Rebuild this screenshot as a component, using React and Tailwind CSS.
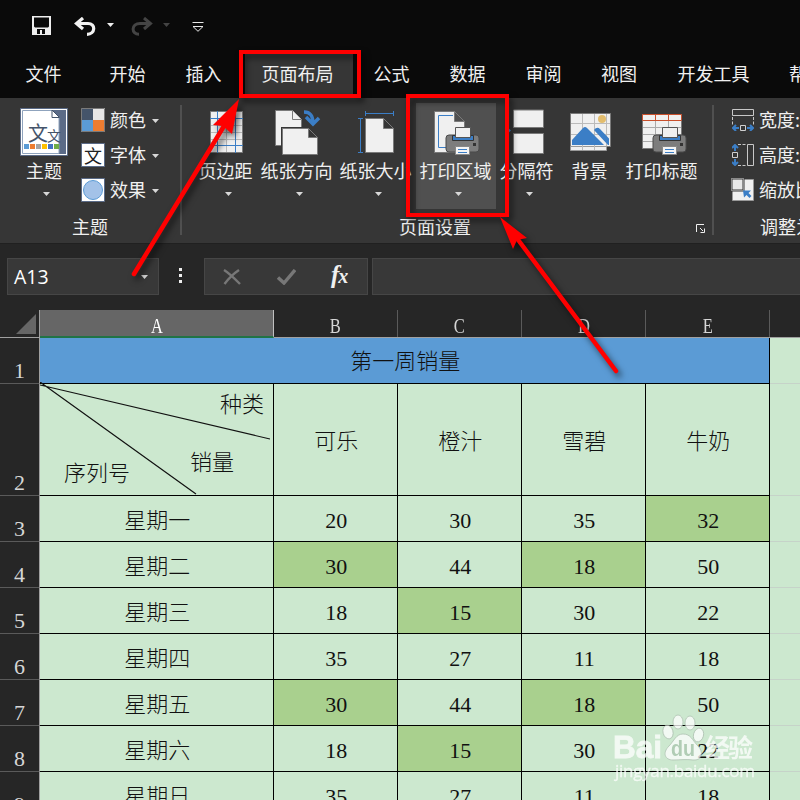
import clsx from "clsx";

const TABS = [
  { label: "文件", className: "w-[87px]" },
  { label: "开始", className: "w-[81px]" },
  { label: "插入", className: "w-[71px]" },
  { label: "页面布局", className: "w-[118px]", active: true },
  { label: "公式", className: "w-[69px]" },
  { label: "数据", className: "w-[83px]" },
  { label: "审阅", className: "w-[69px]" },
  { label: "视图", className: "w-[82px]" },
  { label: "开发工具", className: "w-[107px]" },
  { label: "帮助", className: "w-[80px]" },
];

const COLUMNS = [
  { label: "A", className: "w-[234px]", selected: true },
  { label: "B", className: "w-[124px]" },
  { label: "C", className: "w-[124px]" },
  { label: "D", className: "w-[124px]" },
  { label: "E", className: "w-[124px]" },
];

const ROWS = [
  { id: 3, day: "星期一", values: [20, 30, 35, 32], marked: [3] },
  { id: 4, day: "星期二", values: [30, 44, 18, 50], marked: [0, 2] },
  { id: 5, day: "星期三", values: [18, 15, 30, 22], marked: [1] },
  { id: 6, day: "星期四", values: [35, 27, 11, 18], marked: [] },
  { id: 7, day: "星期五", values: [30, 44, 18, 50], marked: [0, 2] },
  { id: 8, day: "星期六", values: [18, 15, 30, 22], marked: [1] },
  { id: 9, day: "星期日", values: [35, 27, 11, 18], marked: [] },
];

const Caret = ({ className }) => (
  <svg className={clsx("h-1 w-[7px] shrink-0", className || "text-[#d8d8d8]")} viewBox="0 0 7 4" fill="currentColor">
    <path d="M0 0h7L3.5 4z" />
  </svg>
);

const QuickAccessBar = () => (
  <div className="flex h-[52px] items-center pl-8">
    <svg className="mb-0.5 h-[19px] w-[19px]" viewBox="0 0 19 19">
      <path fill="#eee" fillRule="evenodd" d="M0 0h19v19H0zM2 1.5V10.500l1 1h13l1-1V1.500zM5 13v5h3v-4h2v4h3v-5z" />
    </svg>
    <svg className="ml-[23px] h-[19px] w-[22px]" viewBox="0 0 22 19" fill="none" stroke="#f2f2f2">
      <path strokeWidth="3.200" d="M9 1L2.500 6.500L9 12M3 6.500H14C22 6.500 21.500 17.300 13 17.300" />
    </svg>
    <Caret className="mb-0.5 ml-[11px] text-[#eee]" />
    <svg className="ml-[17px] h-[19px] w-[22px]" viewBox="0 0 22 19" fill="none" stroke="#444">
      <path strokeWidth="3" d="M13 1l6.500 5.500L13 12M19 6.500H9C0 6.500 0 17.300 8 17.300" />
    </svg>
    <Caret className="mb-0.5 ml-2.5 text-[#444]" />
    <svg className="mt-px ml-[22px] h-[10px] w-[12px]" viewBox="0 0 12 10" fill="none" stroke="#e8e8e8">
      <path d="M.5.5h11M1 4.500h10L6 9.300z" />
    </svg>
  </div>
);

const TabStrip = () => (
  <div className="flex h-[46px] w-[900px] items-stretch">
    {TABS.map((tab) => (
      <div key={tab.label} className={clsx("flex shrink-0 justify-center", tab.className)}>
        <span
          className={clsx(
            "flex items-center justify-center pb-1 text-[18px]",
            tab.active && "ml-px w-[108px] bg-[#363636] pr-0.5"
          )}
        >
          {tab.label}
        </span>
      </div>
    ))}
  </div>
);

const ThemeIcon = () => (
  <svg className="h-12 w-12" viewBox="0 0 48 48">
    <path fill="#fff" stroke="#5b6b87" d="M.5.5h47v47H.5z" />
    <path fill="#5b6b87" d="M32 2h14v44H39z" />
    <path fill="#fff" stroke="#8fa3bd" d="M2.500 2.500H32l7 7V45.500H2.500z" />
    <path fill="#fff" stroke="#44546a" d="M32 2v7.500h7.500z" />
    <text x="8" y="33" fontSize="20" fill="#44546a">文</text>
    <text x="27" y="33" fontSize="14" fill="#44546a">文</text>
    {["#5b9bd5", "#ed7d31", "#a5a5a5", "#ffc000", "#4472c4", "#70ad47"].map((color, index) => (
      <rect key={color} x={4 + index * 6} y="36" width="5" height="5" fill={color} />
    ))}
  </svg>
);

const ColorsIcon = () => (
  <svg className="h-6 w-6" viewBox="0 0 24 24">
    <path fill="#44546a" d="M0 0h12v12H0z" />
    <path fill="#e7e6e6" d="M12 0h12v12H12z" />
    <path fill="#5b9bd5" d="M0 12h12v12H0z" />
    <path fill="#ed7d31" d="M12 12h12v12H12z" />
    <path fill="none" stroke="#7b7b7b" d="M.5.5h23v23H.5z" />
  </svg>
);

const FontsIcon = () => (
  <svg className="h-6 w-6" viewBox="0 0 24 24">
    <path fill="#fff" stroke="#5b6b87" d="M.5.5h23v23H.5z" />
    <text x="3" y="20" fontSize="18" fill="#222">文</text>
  </svg>
);

const EffectsIcon = () => (
  <svg className="h-6 w-6" viewBox="0 0 24 24">
    <path fill="#fff" stroke="#5b6b87" d="M.5.5h23v23H.5z" />
    <circle cx="12" cy="12" r="9.500" fill="#a3c2e8" stroke="#5b9bd5" />
  </svg>
);

const MarginsIcon = () => (
  <svg className="h-[50px] w-16" viewBox="194 107 64 50">
    <path fill="#f0f0f0" stroke="#7a7a7a" d="M210.500 111.500h32v41h-32z" />
    <path fill="none" stroke="#bbb" d="M211 125.500h31M211 132.500h31M211 139.500h31M226.500 112v40" />
    <path fill="none" stroke="#3b7ec6" d="M217.500 111v42M235.500 111v42M210 118.500h33M210 145.500h33" />
  </svg>
);

const OrientationIcon = () => (
  <svg className="h-[50px] w-[78px]" viewBox="258 107 78 50">
    <path fill="#f0f0f0" stroke="#7a7a7a" d="M275.500 110.500h17l9 9v26h-26z" />
    <path fill="#f0f0f0" stroke="#7a7a7a" d="M292.500 110.500v9h9" />
    <path fill="#363636" d="M281 127h29l9 9v20h-38z" />
    <path fill="#f0f0f0" stroke="#7a7a7a" d="M282.500 128.500h26l9 9v17h-35zM308.500 128.500v9h9" />
    <path fill="none" stroke="#3b7ec6" strokeWidth="3.500" d="M304 112c6 0 9 3 9 12M306 117l7 7l6-6" />
  </svg>
);

const SizeIcon = () => (
  <svg className="h-[50px] w-20" viewBox="336 107 80 50">
    <path fill="#f0f0f0" stroke="#7a7a7a" d="M365.500 118.500h18l10 10v24h-28zM383.500 118.500v10h10" />
    <path fill="none" stroke="#3b7ec6" d="M365.500 111v5M393.500 111v5M365 113.500h29M358 118.500h5M358 152.500h5M360.500 118v35" />
  </svg>
);

const Printer = () => (
  <g>
    <rect x="0" y="8" width="33" height="17" rx="3" fill="#7d7d7d" stroke="#4a4a4a" />
    <path fill="#3b7ec6" stroke="#333" d="M6.500 8.500h21v5h-21z" />
    <path fill="#f0f0f0" stroke="#555" d="M9.500.5h15v10h-15z" />
    <path fill="#333" d="M27 16h3v3h-3z" />
    <path fill="#f5f5f5" stroke="#888" d="M9.500 19.500h14v8h-14z" />
    <path stroke="#3b7ec6" d="M12 22.500h9M12 25.500h9" />
  </g>
);

const PrintAreaIcon = () => (
  <svg className="h-[50px] w-20" viewBox="416 107 80 50">
    <path fill="#f0f0f0" stroke="#7a7a7a" d="M434.500 111.500h20l10 10v31h-30zM454.500 111.500v10h10" />
    <path fill="none" stroke="#3b7ec6" d="M453 115.500h-14.500v32h12" />
    <g transform="translate(446 127)">
      <Printer />
    </g>
  </svg>
);

const BreaksIcon = () => (
  <svg className="h-[50px] w-[62px]" viewBox="496 107 62 50">
    <path fill="#f0f0f0" stroke="#7a7a7a" d="M513.500 110h30v17.500h-30zM513.500 133.500h30v20h-30z" />
    <path fill="#3b7ec6" d="M505 125l6 5.500l-6 5.500z" />
  </svg>
);

const BackgroundIcon = () => (
  <svg className="h-[50px] w-16" viewBox="558 107 64 50">
    <path fill="#f0f0f0" stroke="#7a7a7a" d="M570.500 113.500h40v33h-40z" />
    <path fill="#f0f0f0" stroke="#999" d="M570.500 146.500h36v4h-36z" />
    <path fill="none" stroke="#bbb" d="M582.500 114v36M594.500 114v36M606.500 114v32M571 123.500h39M571 134.500h39" />
    <circle cx="602" cy="119" r="4" fill="#e3bd6d" />
    <path fill="#3b7ec6" d="M572 145v-5l11-12q2-2 4 0l17 17zM594 130q3-4 6-1l9 9.500v6.500h-1z" />
  </svg>
);

const PrintTitlesIcon = () => (
  <svg className="h-[50px] w-20" viewBox="622 107 80 50">
    <path fill="#f0f0f0" stroke="#7a7a7a" d="M642.500 114.500h39v34h-39z" />
    <path fill="none" stroke="#aaa" d="M643 127.500h38M643 134.500h38M643 141.500h38M655.500 121v27M668.500 121v27" />
    <path fill="none" stroke="#c9502c" d="M642.500 114.500h39v6h-39zM655.500 114v6M668.500 114v6" />
    <g transform="translate(653 127)">
      <Printer />
    </g>
  </svg>
);

const PAGE_SETUP = [
  { label: "页边距", icon: MarginsIcon, className: "w-16", menu: true },
  { label: "纸张方向", icon: OrientationIcon, className: "w-[78px]", menu: true },
  { label: "纸张大小", icon: SizeIcon, className: "w-20", menu: true },
  { label: "打印区域", icon: PrintAreaIcon, className: "w-20 bg-[#505050]", menu: true },
  { label: "分隔符", icon: BreaksIcon, className: "w-[62px]", menu: true },
  { label: "背景", icon: BackgroundIcon, className: "w-16" },
  { label: "打印标题", icon: PrintTitlesIcon, className: "w-20" },
];

const THEME_TOOLS = [
  { label: "颜色", icon: ColorsIcon },
  { label: "字体", icon: FontsIcon },
  { label: "效果", icon: EffectsIcon },
];

const WidthIcon = () => (
  <svg className="h-[22px] w-[22px]" viewBox="0 0 22 22" fill="none">
    <path stroke="#c8c8c8" d="M.5.5h21v6H.5z" />
    <path stroke="#c8c8c8" strokeDasharray="3 1.500" d="M.5 8v8M21.500 8v8" />
    <path stroke="#d0d0d0" d="M8.500 16.500h5v5h-5z" />
    <path stroke="#3b7ec6" strokeWidth="2" d="M7 19H1M4 16l-3 3l3 3M15 19h6M18 16l3 3l-3 3" />
  </svg>
);

const HeightIcon = () => (
  <svg className="h-[22px] w-[22px]" viewBox="0 0 22 22" fill="none">
    <path stroke="#c8c8c8" d="M15.500.5h6v21h-6z" />
    <path stroke="#c8c8c8" strokeDasharray="3 1.500" d="M6 .5h8M6 21.500h8" />
    <path stroke="#d0d0d0" d="M.5 8.500h5v5h-5z" />
    <path stroke="#3b7ec6" strokeWidth="2" d="M3 7V1M0 4l3-3l3 3M3 15v6M0 18l3 3l3-3" />
  </svg>
);

const ScaleIcon = () => (
  <svg className="h-[22px] w-[22px] overflow-visible" viewBox="0 0 22 22" fill="none">
    <path fill="#f0f0f0" stroke="#999" d="M.5.5h21v21H.5z" />
    <path fill="#e8e8e8" stroke="#363636" strokeWidth="2" d="M-.5-.5h12v12h-12z" />
    <path stroke="#ddd" strokeDasharray="1 1" d="M-.5-.5h12v12h-12z" />
    <path fill="#3b7ec6" d="M11 11.500h8l-2.500 2.500l3 3l-2 2l-3-3l-2.500 2.500z" />
  </svg>
);

const SCALE_TOOLS = [
  { label: "宽度:", icon: WidthIcon },
  { label: "高度:", icon: HeightIcon },
  { label: "缩放比例:", icon: ScaleIcon },
];

const Ribbon = () => (
  <div className="flex h-[145px] w-[900px] bg-[#363636] text-[18px] leading-6">
    <div className="flex w-[180px] flex-col pt-2.5">
      <div className="flex h-[106px]">
        <div className="flex w-[61px] shrink-0 flex-col items-center pl-[27px]">
          <div className="flex w-12 flex-col items-center">
            <ThemeIcon />
            <span className="mt-0.5 whitespace-nowrap">主题</span>
            <Caret className="mt-2.5 ml-[5px] text-[#d8d8d8]" />
          </div>
        </div>
        <div className="ml-5 flex flex-col gap-[11px]">
          {THEME_TOOLS.map(({ label, icon: Icon }) => (
            <div key={label} className="flex h-6 items-center">
              <Icon />
              <span className="mb-0.5 ml-[5px] h-6">{label}</span>
              <Caret className="mt-0.5 ml-1.5 text-[#d8d8d8]" />
            </div>
          ))}
        </div>
      </div>
      <div className="text-center">主题</div>
    </div>
    <div className="mt-[7px] h-[130px] w-0.5 bg-[#505050]" />
    <div className="flex w-[530px] flex-col pt-[5px]">
      <div className="flex h-[106px] pl-3">
        {PAGE_SETUP.map(({ label, icon: Icon, className, menu }) => (
          <div key={label} className={clsx("flex shrink-0 flex-col items-center pt-1", className)}>
            <Icon />
            <span className="mt-px mr-px whitespace-nowrap">{label}</span>
            {menu && <Caret className="mt-2.5 ml-[5px] text-[#d8d8d8]" />}
          </div>
        ))}
      </div>
      <div className="flex items-center justify-between pt-[5px] pr-[7px]">
        <span className="ml-[217px]">页面设置</span>
        <svg className="mt-1 h-[9px] w-[9px]" viewBox="0 0 9 9" fill="none" stroke="#f0f0f0">
          <path d="M.5 8V.5H8M4 4l3 3M8.500 4.500v4h-4" />
        </svg>
      </div>
    </div>
    <div className="mt-[7px] h-[130px] w-0.5 bg-[#505050]" />
    <div className="flex flex-col pt-2.5 pl-[18px]">
      <div className="flex h-[106px] flex-col gap-[11px]">
        {SCALE_TOOLS.map(({ label, icon: Icon }) => (
          <div key={label} className="flex h-6 items-center whitespace-nowrap">
            <Icon />
            <span className="mb-0.5 ml-[5px] h-6">{label}</span>
          </div>
        ))}
      </div>
      <span className="ml-7">调整为合适大小</span>
    </div>
  </div>
);

const FormulaBar = () => (
  <div className="flex h-[67px] items-start border-t border-[#202020] bg-[#262626] pt-3.5 pl-[7px]">
    <div className="flex h-[37px] w-[152px] items-center justify-between border border-[#464646] bg-[#383838] pr-2.5 pl-1.5 font-['Open_Sans',sans-serif] text-[19.500px] text-white">
      A13
      <Caret />
    </div>
    <div className="mt-2.5 ml-5 flex w-[3px] flex-col gap-[3px]">
      <span className="h-[3px] bg-[#eee]" />
      <span className="h-[3px] bg-[#eee]" />
      <span className="h-[3px] bg-[#eee]" />
    </div>
    <div className="ml-[22px] flex h-[37px] w-[164px] items-center border border-[#464646] bg-[#383838] pl-[18px]">
      <svg className="h-4 w-[18px]" viewBox="0 0 18 16" fill="none" stroke="#777" strokeWidth="2.400">
        <path d="M1 1c5 3 10 8 16 14M16 1C10 5 6 9 1.500 15" />
      </svg>
      <svg className="ml-9 h-4 w-[19px]" viewBox="0 0 19 16" fill="none" stroke="#777" strokeWidth="3.400">
        <path d="M1 8.500l6 5.500L18 1" />
      </svg>
      <span className="ml-[35px] pb-1 font-['Liberation_Serif',serif] text-[25px] font-bold italic tracking-[-1px]">
        f<span className="text-[20px]">x</span>
      </span>
    </div>
    <div className="ml-1 h-[37px] flex-1 border border-r-0 border-[#464646] bg-[#383838]" />
  </div>
);

const ColumnHeaders = () => (
  <div className="flex h-7 border-b border-[#a0a0a0] bg-[#262626] text-[22px] text-[#d6d6d6]">
    <div className="flex w-10 shrink-0 items-end justify-end border-r border-[#a0a0a0] pr-[3px] pb-[3px]">
      <svg className="h-5 w-5" viewBox="0 0 20 20">
        <path fill="#666" d="M20 0v20H0z" />
      </svg>
    </div>
    {COLUMNS.map((column) => (
      <div
        key={column.label}
        className={clsx(
          "flex shrink-0 items-center justify-center border-r pt-1",
          column.className,
          column.selected ? "-mb-px border-b-2 border-r-[#c0c0c0] border-b-[#217346] bg-[#666] text-white" : "border-[#5a5a5a]"
        )}
      >
        <span className="scale-x-75">{column.label}</span>
      </div>
    ))}
  </div>
);

const RowHeader = ({ children }) => (
  <div className="flex w-10 shrink-0 items-end justify-center border-r border-b border-r-[#a0a0a0] border-b-[#5a5a5a] bg-[#262626] leading-6 text-[#d6d6d6]">
    {children}
  </div>
);

const Cell = ({ className, children }) => (
  <div className={clsx("flex shrink-0 items-center justify-center border-r border-b border-black pl-[1.500px]", className)}>
    {children}
  </div>
);

const Filler = () => <div className="flex-1 border-b border-[#c6d3c9]" />;

const Sheet = () => (
  <div className="font-['Liberation_Serif','Noto_Sans_CJK_SC',serif] text-[22px] font-light">
    <ColumnHeaders />
    <div className="bg-[#cce8cf] text-[#111]">
      <div className="flex h-[46px]">
        <RowHeader>1</RowHeader>
        <Cell className="w-[730px] bg-[#5b9bd5] pt-0.5">第一周销量</Cell>
        <Filler />
      </div>
      <div className="flex h-28">
        <RowHeader>2</RowHeader>
        <div className="relative w-[234px] shrink-0 border-r border-b border-black pt-[9px] pr-[9px] pl-6 leading-6">
          <svg className="absolute -top-0.5 left-0 h-[113px] w-[233px]" viewBox="0 -2 233 113" fill="none" stroke="#111" strokeWidth="1.200">
            <path d="M0-2L156 110M0 1L230 55" />
          </svg>
          <div className="text-right">种类</div>
          <div className="mt-[34px] flex justify-between pr-[30px]">
            <span className="mt-[11px]">序列号</span>
            <span>销量</span>
          </div>
        </div>
        {["可乐", "橙汁", "雪碧", "牛奶"].map((name) => (
          <Cell key={name} className="w-[124px] pt-1">{name}</Cell>
        ))}
        <Filler />
      </div>
      {ROWS.map((row) => (
        <div key={row.id} className="flex h-[46px]">
          <RowHeader>{row.id}</RowHeader>
          <Cell className="w-[234px] pt-1">{row.day}</Cell>
          {row.values.map((value, index) => (
            <Cell key={index} className={clsx("w-[124px] pt-1", row.marked.includes(index) && "bg-[#a9d08e]")}>
              {value}
            </Cell>
          ))}
          <Filler />
        </div>
      ))}
    </div>
  </div>
);

const Annotations = () => (
  <svg className="absolute inset-0 h-[800px] w-[800px] drop-shadow-[3px_4px_3px_rgba(0,0,0,0.6)]" viewBox="0 0 800 800">
    <g fill="none" stroke="#f00">
      <path strokeWidth="4" d="M241 52h118v44H241zM408 96h99v119h-99z" />
      <path strokeWidth="4.500" strokeLinecap="round" d="M134 274L224 126M616 371L516 237" />
    </g>
    <path fill="#f00" d="M239 99l-26 26l10 1l9 8zM500 217l27 21l-10 2l-4 9z" />
  </svg>
);

const Watermark = () => (
  <svg className="absolute top-[710px] left-[608px] h-[76px] w-[156px] opacity-75" viewBox="0 0 156 76" fill="#fff">
    <g stroke="#a5b5a8" strokeWidth="0.800">
      <ellipse cx="60" cy="22" rx="5" ry="7" transform="rotate(-15 60 22)" />
      <ellipse cx="70" cy="12" rx="5" ry="7" />
      <ellipse cx="82" cy="13" rx="5" ry="7" />
      <ellipse cx="90.500" cy="25" rx="5" ry="7" transform="rotate(15 90.5 25)" />
      <path d="M75 24c-7 0-9 7-14 12c-7 7-4 14 4 14c7 0 13-1 20 0c9 1 11-8 5-14c-6-6-7-12-15-12z" />
    </g>
    <g fontFamily="Liberation Sans, Noto Sans CJK SC, sans-serif" fontWeight="bold">
      <text x="5" y="48" fontSize="32" stroke="#fff" strokeWidth="0.800" textLength="49" lengthAdjust="spacingAndGlyphs">Bai</text>
      <text x="63" y="46" fontSize="22" fill="#a8c4ad" textLength="24" lengthAdjust="spacingAndGlyphs">du</text>
      <text x="97" y="47" fontSize="25" textLength="48">经验</text>
    </g>
    <text x="7" y="67" fontSize="17" fontFamily="Open Sans, sans-serif" stroke="#fff" strokeWidth="0.300" textLength="140">
      jingyan.baidu.com
    </text>
  </svg>
);

export default function App() {
  return (
    <div className="relative h-[800px] w-[800px] overflow-hidden bg-[#0a0a0a] font-['Noto_Sans_CJK_SC',sans-serif] text-[#f0f0f0]">
      <QuickAccessBar />
      <TabStrip />
      <Ribbon />
      <FormulaBar />
      <Sheet />
      <Annotations />
      <Watermark />
    </div>
  );
}
